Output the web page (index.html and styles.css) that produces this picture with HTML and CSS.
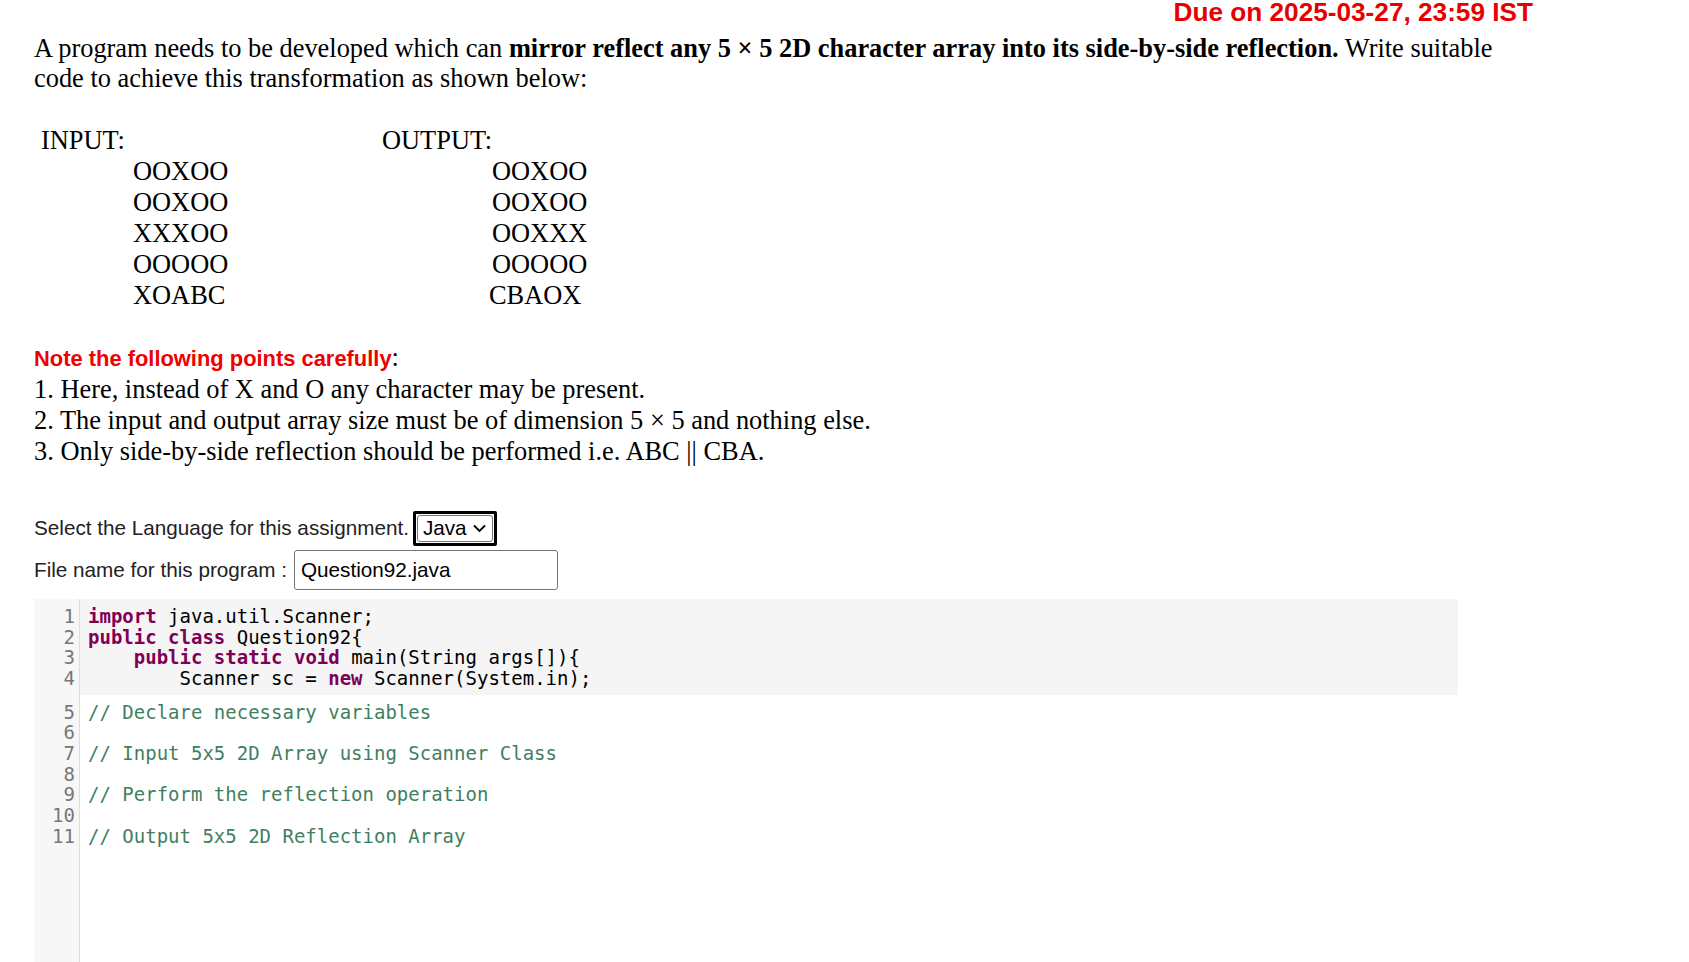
FILE: index.html
```html
<!DOCTYPE html>
<html lang="en">
<head>
<meta charset="utf-8">
<title>Question 92</title>
<link rel="stylesheet" href="styles.css">
</head>
<body>
<div class="page">
  <div class="due">Due on 2025-03-27, 23:59 IST</div>
  <p class="intro">A program needs to be developed which can <b>mirror reflect any 5 × 5 2D character array into its side-by-side reflection.</b> Write suitable code to achieve this transformation as shown below:</p>

  <div class="io">
    <div class="io-col io-in">
      <div class="io-label">INPUT:</div>
      <div class="io-rows">
        <div>OOXOO</div>
        <div>OOXOO</div>
        <div>XXXOO</div>
        <div>OOOOO</div>
        <div>XOABC</div>
      </div>
    </div>
    <div class="io-col io-out">
      <div class="io-label">OUTPUT:</div>
      <div class="io-rows">
        <div>OOXOO</div>
        <div>OOXOO</div>
        <div>OOXXX</div>
        <div>OOOOO</div>
        <div class="io-last">CBAOX</div>
      </div>
    </div>
  </div>

  <div class="notes">
    <div><span class="note-title">Note the following points carefully</span>:</div>
    <div>1. Here, instead of X and O any character may be present.</div>
    <div>2. The input and output array size must be of dimension 5 × 5 and nothing else.</div>
    <div>3. Only side-by-side reflection should be performed i.e. ABC || CBA.</div>
  </div>

  <div class="form-row lang-row">
    <span class="form-label">Select the Language for this assignment.</span>
    <span class="select-ring">
      <span class="select-box">
        <span>Java</span>
        <svg class="chev" width="15" height="10" viewBox="0 0 15 10"><path d="M2 2.5 L7.5 8 L13 2.5" fill="none" stroke="#000" stroke-width="1.9"/></svg>
      </span>
    </span>
  </div>
  <div class="form-row file-row">
    <span class="form-label">File name for this program :</span>
    <span class="text-input">Question92.java</span>
  </div>
</div>

<div class="editor">
  <div class="gutter">
    <div class="ln">1</div>
    <div class="ln">2</div>
    <div class="ln">3</div>
    <div class="ln">4</div>
    <div class="ln-gap"></div>
    <div class="ln">5</div>
    <div class="ln">6</div>
    <div class="ln">7</div>
    <div class="ln">8</div>
    <div class="ln">9</div>
    <div class="ln">10</div>
    <div class="ln">11</div>
  </div>
  <div class="code">
    <div class="readonly">
<pre class="line"><span class="kw">import</span> java.util.Scanner;</pre>
<pre class="line"><span class="kw">public</span> <span class="kw">class</span> Question92{</pre>
<pre class="line">    <span class="kw">public</span> <span class="kw">static</span> <span class="kw">void</span> main(String args[]){</pre>
<pre class="line">        Scanner sc = <span class="kw">new</span> Scanner(System.in);</pre>
    </div>
    <div class="editable">
<pre class="line"><span class="cm">// Declare necessary variables</span></pre>
<pre class="line"> </pre>
<pre class="line"><span class="cm">// Input 5x5 2D Array using Scanner Class</span></pre>
<pre class="line"> </pre>
<pre class="line"><span class="cm">// Perform the reflection operation</span></pre>
<pre class="line"> </pre>
<pre class="line"><span class="cm">// Output 5x5 2D Reflection Array</span></pre>
    </div>
  </div>
</div>
</body>
</html>
```

FILE: styles.css
```css
html, body {
  margin: 0;
  padding: 0;
  background: #fff;
}

body {
  font-family: "Liberation Serif", "Times New Roman", serif;
  font-size: 26.4px;
  color: #000;
  overflow: hidden;
}

.page {
  width: 1500px;
  padding-left: 34px;
}

.due {
  font-family: "Liberation Sans", Arial, sans-serif;
  font-weight: bold;
  font-size: 26.2px;
  line-height: 24px;
  color: #e60000;
  text-align: right;
  padding-right: 1px;
}

.intro {
  margin: 9px 0 0;
  line-height: 30px;
}

.io {
  display: grid;
  grid-template-columns: 341px auto;
  margin-top: 31.6px;
  padding-left: 7px;
  line-height: 31px;
}

.io-in .io-rows {
  padding-left: 92px;
}

.io-out .io-rows {
  padding-left: 110px;
}

.io-last {
  margin-left: -3px;
}

.notes {
  margin-top: 31.4px;
  line-height: 31px;
}

.note-title {
  font-family: "Liberation Sans", Arial, sans-serif;
  font-weight: bold;
  font-size: 21.9px;
  color: #f00000;
}

.form-row {
  display: flex;
  align-items: center;
  font-family: "Liberation Sans", Arial, sans-serif;
  font-size: 20.7px;
  color: #222;
}

.lang-row {
  margin-top: 45px;
  height: 33px;
}

.file-row {
  margin-top: 5px;
  height: 40px;
}

.form-label {
  white-space: nowrap;
}

.select-ring {
  display: inline-flex;
  margin-left: 4px;
  border: 3px solid #000;
  border-radius: 2px;
  padding: 1px;
  height: 27px;
  box-sizing: content-box;
}

.select-box {
  display: inline-flex;
  align-items: center;
  gap: 5px;
  border: 1px solid #767676;
  border-radius: 3px;
  padding: 0 5px 0 5px;
  color: #000;
  font-size: 20.7px;
}

.chev {
  display: block;
}

.text-input {
  display: inline-flex;
  align-items: center;
  margin-left: 7px;
  width: 256px;
  height: 38px;
  border: 1px solid #767676;
  border-radius: 3px;
  padding-left: 6px;
  color: #000;
}

.editor {
  display: flex;
  margin: 9px 0 0 34px;
  width: 1424px;
  min-height: 380px;
  background: #fff;
  font-family: "DejaVu Sans Mono", Consolas, monospace;
  font-size: 19px;
  line-height: 20.7px;
}

.gutter {
  width: 45px;
  flex: none;
  background: #f7f7f7;
  border-right: 1px solid #dddddd;
  padding-top: 7px;
  box-sizing: content-box;
}

.ln {
  height: 20.7px;
  text-align: right;
  padding-right: 4px;
  color: #777;
}

.ln-gap {
  height: 13px;
}

.code {
  flex: 1;
  min-width: 0;
}

.readonly {
  background: #f5f5f5;
  padding: 7px 0 6px 8px;
}

.editable {
  padding: 7px 0 0 8px;
}

.line {
  margin: 0;
  font: inherit;
  height: 20.7px;
  white-space: pre;
  color: #000;
}

.kw {
  color: #7f0055;
  font-weight: bold;
}

.cm {
  color: #3f7f5f;
}
```
